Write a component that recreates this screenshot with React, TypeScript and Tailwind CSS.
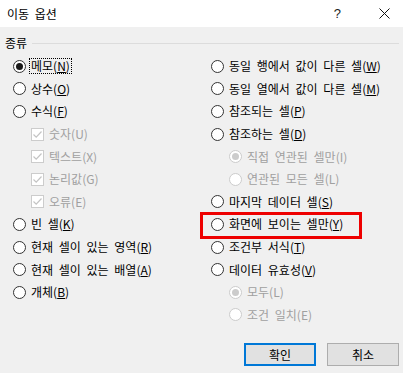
import React from "react";

type Item = {
  label: string;
  key: string;
  kind: "radio" | "check";
  checked?: boolean;
  disabled?: boolean;
  indent?: boolean;
  focus?: boolean;
  highlight?: boolean;
};

const left: Item[] = [
  { label: "메모", key: "N", kind: "radio", checked: true, focus: true },
  { label: "상수", key: "O", kind: "radio" },
  { label: "수식", key: "F", kind: "radio" },
  { label: "숫자", key: "U", kind: "check", checked: true, disabled: true, indent: true },
  { label: "텍스트", key: "X", kind: "check", checked: true, disabled: true, indent: true },
  { label: "논리값", key: "G", kind: "check", checked: true, disabled: true, indent: true },
  { label: "오류", key: "E", kind: "check", checked: true, disabled: true, indent: true },
  { label: "빈 셀", key: "K", kind: "radio" },
  { label: "현재 셀이 있는 영역", key: "R", kind: "radio" },
  { label: "현재 셀이 있는 배열", key: "A", kind: "radio" },
  { label: "개체", key: "B", kind: "radio" },
];

const right: Item[] = [
  { label: "동일 행에서 값이 다른 셀", key: "W", kind: "radio" },
  { label: "동일 열에서 값이 다른 셀", key: "M", kind: "radio" },
  { label: "참조되는 셀", key: "P", kind: "radio" },
  { label: "참조하는 셀", key: "D", kind: "radio" },
  { label: "직접 연관된 셀만", key: "I", kind: "radio", checked: true, disabled: true, indent: true },
  { label: "연관된 모든 셀", key: "L", kind: "radio", disabled: true, indent: true },
  { label: "마지막 데이터 셀", key: "S", kind: "radio" },
  { label: "화면에 보이는 셀만", key: "Y", kind: "radio", highlight: true },
  { label: "조건부 서식", key: "T", kind: "radio" },
  { label: "데이터 유효성", key: "V", kind: "radio" },
  { label: "모두", key: "L", kind: "radio", checked: true, disabled: true, indent: true },
  { label: "조건 일치", key: "E", kind: "radio", disabled: true, indent: true },
];

function Radio({ checked, disabled }: { checked?: boolean; disabled?: boolean }) {
  return (
    <span
      className={`flex h-[13px] w-[13px] shrink-0 items-center justify-center rounded-full border bg-white ${
        disabled ? "border-[#cccccc]" : "border-[#333333]"
      }`}
    >
      {checked && (
        <span
          className={`h-[7px] w-[7px] rounded-full ${disabled ? "bg-[#cccccc]" : "bg-[#1a1a1a]"}`}
        />
      )}
    </span>
  );
}

function Check({ disabled }: { disabled?: boolean }) {
  return (
    <span
      className={`flex h-[13px] w-[13px] shrink-0 items-center justify-center border bg-white ${
        disabled ? "border-[#cccccc]" : "border-[#333333]"
      }`}
    >
      <svg width="11" height="11" viewBox="0 0 11 11">
        <path d="M1.5 5.5 L4.2 8.2 L9.5 2.5" fill="none" stroke={disabled ? "#c4c4c4" : "#000"} strokeWidth="1.2" />
      </svg>
    </span>
  );
}

function Row({ item }: { item: Item }) {
  const textColor = item.disabled ? "text-[#a0a0a0]" : "text-black";
  const indent = item.indent ? "pl-[18px]" : "";
  return (
    <div className={`relative flex h-[22.6px] items-center ${indent}`}>
      {item.highlight && (
        <span className="pointer-events-none absolute left-[-11px] top-[-1px] h-[27px] w-[162px] border-[3px] border-[#ee0000]" />
      )}
      {item.kind === "radio" ? (
        <Radio checked={item.checked} disabled={item.disabled} />
      ) : (
        <Check disabled={item.disabled} />
      )}
      <span
        className={`ml-[3px] whitespace-nowrap leading-[14px] [word-spacing:3px] ${textColor} ${
          item.focus ? "border border-dotted border-black px-[1px]" : "border border-transparent px-[1px]"
        }`}
      >
        {item.label}(<span className={item.disabled ? "" : "underline underline-offset-[1px]"}>{item.key}</span>)
      </span>
    </div>
  );
}

export default function App() {
  return (
    <div
      className="h-[373px] w-[403px] overflow-hidden bg-[#f0f0f0] text-[12px]"
      style={{ fontFamily: '"Noto Sans CJK KR", "Noto Sans", sans-serif' }}
    >
      <div className="flex h-[27px] items-center bg-white pl-[7px] pr-[13px]">
        <span className="text-[12px] text-black [word-spacing:3px]">이동 옵션</span>
        <span className="ml-auto mr-[38px] text-[13px] text-[#222]" style={{ fontFamily: '"Liberation Sans", sans-serif' }}>?</span>
        <svg width="11" height="11" viewBox="0 0 11 11">
          <path d="M0.5 0.5 L10.5 10.5 M10.5 0.5 L0.5 10.5" stroke="#111" strokeWidth="1" />
        </svg>
      </div>
      <div className="pt-[8px]">
        <div className="flex h-[16px] items-center pl-[5px] pr-[4px]">
          <span className="text-black">종류</span>
          <span className="ml-[5px] h-px flex-1 bg-[#dcdcdc]" />
        </div>
        <div className="flex pt-[4px]">
          <div className="w-[211px] pl-[13px]">
            {left.map((it, i) => (
              <Row key={i} item={it} />
            ))}
          </div>
          <div className="flex-1">
            {right.map((it, i) => (
              <Row key={i} item={it} />
            ))}
          </div>
        </div>
        <div className="mt-[17px] flex justify-end gap-[11px] pr-[4px]">
          <button className="flex h-[23px] w-[72px] items-center justify-center border-2 border-[#0078d7] bg-[#e1e1e1] text-black">
            확인
          </button>
          <button className="flex h-[23px] w-[72px] items-center justify-center border border-[#adadad] bg-[#e1e1e1] text-black">
            취소
          </button>
        </div>
      </div>
    </div>
  );
}
